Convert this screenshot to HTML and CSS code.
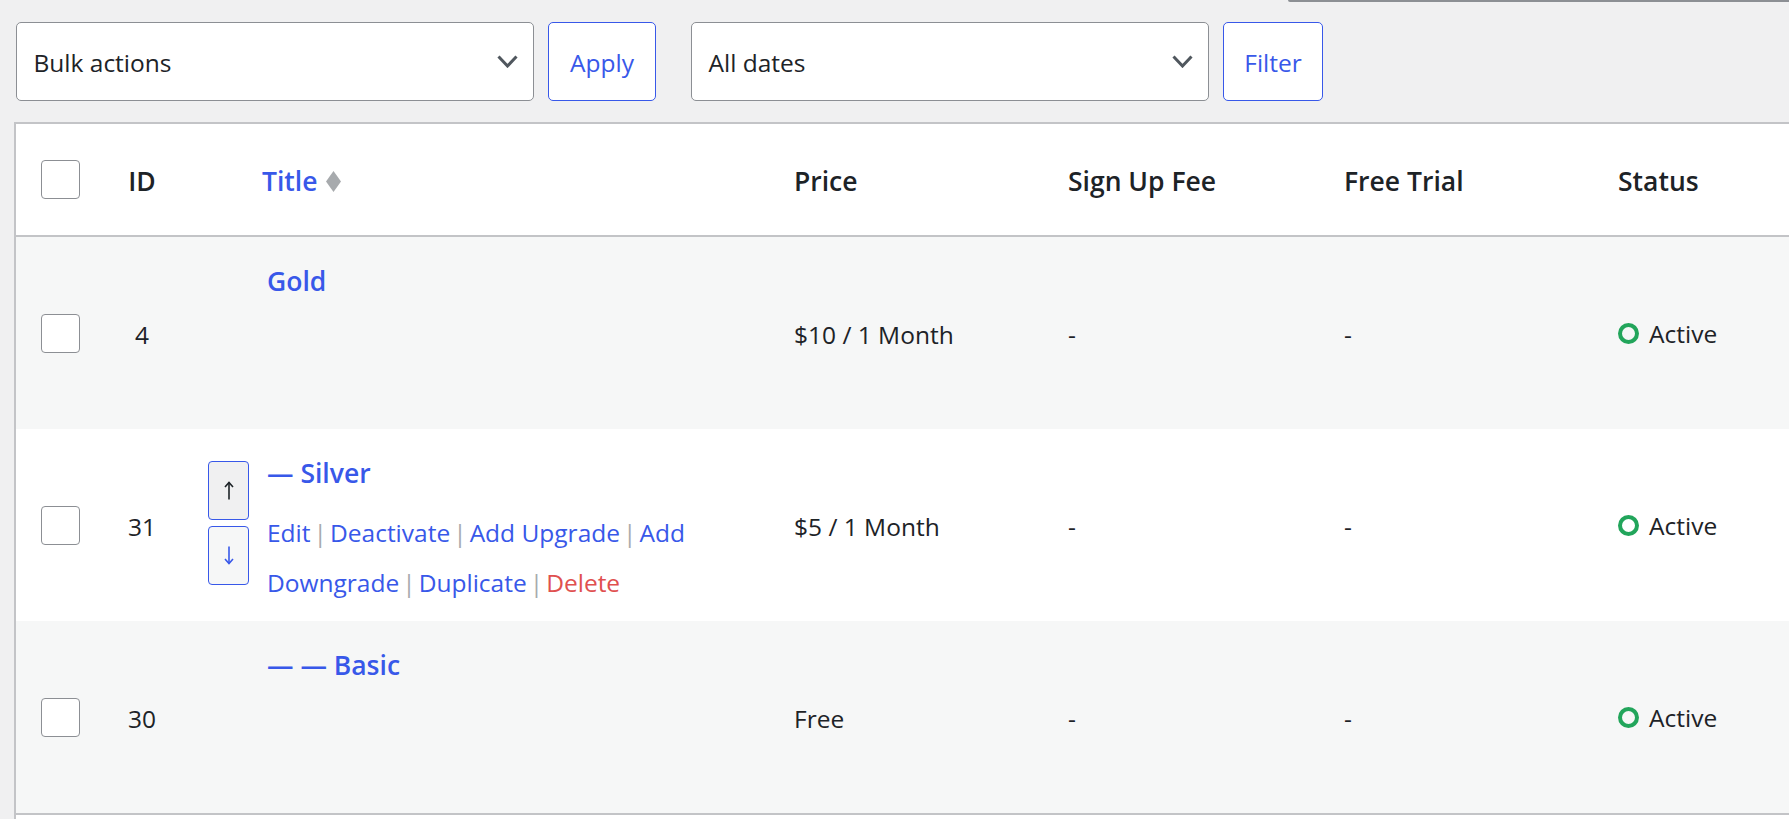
FILE: index.html
```html
<!DOCTYPE html>
<html lang="en">
<head>
<meta charset="utf-8">
<title>Subscription Plans</title>
<link rel="stylesheet" href="styles.css">
</head>
<body>
<div class="wrap">
  <div class="topline-row"><div class="topline"></div></div>

  <div class="tablenav">
    <div class="select">
      <span>Bulk actions</span>
      <svg class="chev" width="21" height="13" viewBox="0 0 21 13"><polyline points="1.5,1.5 10.5,11 19.5,1.5" fill="none" stroke="#50575e" stroke-width="3"/></svg>
    </div>
    <div class="btn">Apply</div>
    <div class="select select-dates">
      <span>All dates</span>
      <svg class="chev" width="21" height="13" viewBox="0 0 21 13"><polyline points="1.5,1.5 10.5,11 19.5,1.5" fill="none" stroke="#50575e" stroke-width="3"/></svg>
    </div>
    <div class="btn btn-filter">Filter</div>
  </div>

  <table class="list">
    <colgroup>
      <col class="c-cb"><col class="c-id"><col class="c-title"><col class="c-price"><col class="c-fee"><col class="c-trial"><col class="c-status">
    </colgroup>
    <thead>
      <tr>
        <th class="cb"><span class="checkbox"></span></th>
        <th class="id">ID</th>
        <th class="title-h"><a class="sort">Title</a><svg class="sorticon" width="15" height="21" viewBox="0 0 15 21"><polygon points="7.5,0 15,10.5 7.5,21 0,10.5" fill="#a7aaad"/></svg></th>
        <th>Price</th>
        <th>Sign Up Fee</th>
        <th>Free Trial</th>
        <th>Status</th>
      </tr>
    </thead>
    <tbody>
      <tr class="alt">
        <td class="cb"><span class="checkbox"></span></td>
        <td class="id">4</td>
        <td class="title">
          <div class="title-flex">
            <div class="arrows"></div>
            <div class="title-main"><div class="title-line"><a class="row-title">Gold</a></div></div>
          </div>
        </td>
        <td>$10 / 1 Month</td>
        <td>-</td>
        <td>-</td>
        <td><span class="status"><svg width="21" height="21" viewBox="0 0 21 21"><circle cx="10.5" cy="10.5" r="8.5" fill="none" stroke="#22a55b" stroke-width="4"/></svg>Active</span></td>
      </tr>
      <tr>
        <td class="cb"><span class="checkbox"></span></td>
        <td class="id">31</td>
        <td class="title">
          <div class="title-flex">
            <div class="arrows">
              <span class="arrow arrow-up"><svg width="10" height="19" viewBox="0 0 10 19"><line x1="5" y1="1.5" x2="5" y2="18.5" stroke="#1d2327" stroke-width="1.6"/><polyline points="1,6 5,1.5 9,6" fill="none" stroke="#1d2327" stroke-width="1.6"/></svg></span>
              <span class="arrow arrow-down"><svg width="10" height="19" viewBox="0 0 10 19"><line x1="5" y1="0.5" x2="5" y2="17.5" stroke="#3858e9" stroke-width="1.6"/><polyline points="1,13 5,17.5 9,13" fill="none" stroke="#3858e9" stroke-width="1.6"/></svg></span>
            </div>
            <div class="title-main">
              <div class="title-line"><a class="row-title">— Silver</a></div>
              <div class="row-actions"><span class="line"><a>Edit</a><span class="sep">|</span><a>Deactivate</a><span class="sep">|</span><a>Add Upgrade</a><span class="sep">|</span><a>Add</a></span> <span class="line"><a>Downgrade</a><span class="sep">|</span><a>Duplicate</a><span class="sep">|</span><a class="delete">Delete</a></span></div>
            </div>
          </div>
        </td>
        <td>$5 / 1 Month</td>
        <td>-</td>
        <td>-</td>
        <td><span class="status"><svg width="21" height="21" viewBox="0 0 21 21"><circle cx="10.5" cy="10.5" r="8.5" fill="none" stroke="#22a55b" stroke-width="4"/></svg>Active</span></td>
      </tr>
      <tr class="alt">
        <td class="cb"><span class="checkbox"></span></td>
        <td class="id">30</td>
        <td class="title">
          <div class="title-flex">
            <div class="arrows"></div>
            <div class="title-main"><div class="title-line"><a class="row-title">— — Basic</a></div></div>
          </div>
        </td>
        <td>Free</td>
        <td>-</td>
        <td>-</td>
        <td><span class="status"><svg width="21" height="21" viewBox="0 0 21 21"><circle cx="10.5" cy="10.5" r="8.5" fill="none" stroke="#22a55b" stroke-width="4"/></svg>Active</span></td>
      </tr>
    </tbody>
    <tfoot>
      <tr><td></td><td></td><td></td><td></td><td></td><td></td><td></td></tr>
    </tfoot>
  </table>
</div>
</body>
</html>
```

FILE: styles.css
```css
html, body {
  margin: 0;
  padding: 0;
  overflow: hidden;
}
body {
  background: #f0f0f1;
  color: #1d2327;
  font-family: "Open Sans", "Noto Sans", "Liberation Sans", sans-serif;
  font-size: 24.5px;
}
a {
  color: #3858e9;
  text-decoration: none;
}
.wrap {
  padding-left: 14px;
  width: 1894px;
}
.topline-row {
  display: flex;
  justify-content: flex-end;
  width: 1775px;
  height: 2px;
}
.topline {
  width: 501px;
  height: 2px;
  background: #8c8f94;
  border-bottom-left-radius: 3px;
}
.tablenav {
  display: flex;
  align-items: center;
  margin: 20px 0 21px 2px;
  height: 79px;
}
.select {
  box-sizing: border-box;
  width: 518px;
  height: 79px;
  border: 1.5px solid #8c8f94;
  border-radius: 5px;
  background: #fff;
  display: flex;
  align-items: center;
  justify-content: space-between;
  padding: 2px 15px 0 16.5px;
  color: #1d2327;
}
.select .chev {
  margin-top: -2px;
}
.select-dates {
  margin-left: 35px;
}
.btn {
  box-sizing: border-box;
  width: 108px;
  height: 79px;
  margin-left: 14px;
  padding-top: 2px;
  border: 1.5px solid #3858e9;
  border-radius: 5px;
  background: #fff;
  color: #3858e9;
  display: flex;
  align-items: center;
  justify-content: center;
}
.btn-filter {
  width: 100px;
}
.chev {
  display: block;
}
.list {
  table-layout: fixed;
  width: 1894px;
  border-spacing: 0;
  border-collapse: separate;
  background: #fff;
  border-top: 2px solid #c3c4c7;
  border-left: 2px solid #c3c4c7;
}
.c-cb { width: 91px; }
.c-id { width: 70px; }
.c-title { width: 607px; }
.c-price { width: 274px; }
.c-fee { width: 276px; }
.c-trial { width: 274px; }
.c-status { width: 300px; }
th, td {
  padding: 2px 10px 0;
  text-align: left;
  vertical-align: middle;
}
thead th {
  height: 109px;
  font-size: 26.5px;
  font-weight: 600;
  border-bottom: 2px solid #c3c4c7;
  white-space: nowrap;
}
th.cb, td.cb {
  padding: 0 0 0 25px;
}
th.id, td.id {
  text-align: center;
  padding: 2px 0 0;
}
th.title-h {
  padding-left: 85px;
}
.sort {
  font-weight: 600;
}
.sorticon {
  vertical-align: -1px;
  margin-left: 8px;
}
.checkbox {
  display: block;
  box-sizing: border-box;
  width: 39px;
  height: 39px;
  border: 1.5px solid #8c8f94;
  border-radius: 4px;
  background: #fff;
}
tbody tr {
  height: 192px;
}
tbody tr.alt td {
  background: #f6f7f7;
}
tbody td.title {
  vertical-align: top;
  padding: 23.5px 10px 0 31px;
}
.title-flex {
  display: flex;
}
.arrows {
  flex: 0 0 41px;
  margin-right: 18px;
  margin-top: 8.5px;
  display: flex;
  flex-direction: column;
  gap: 6px;
}
.arrow {
  box-sizing: border-box;
  width: 41px;
  height: 59px;
  border: 1.5px solid #3858e9;
  border-radius: 4px;
  display: flex;
  align-items: center;
  justify-content: center;
}
.arrow-up {
  background: #f0f0f1;
}
.arrow-down {
  background: #f6f7f7;
}
.arrow svg {
  display: block;
}
.title-main {
  flex: 1;
}
.title-line {
  height: 40px;
  line-height: 40px;
}
.row-title {
  font-size: 26.5px;
  font-weight: 600;
}
.row-actions {
  margin-top: 15px;
  line-height: 50px;
}
.row-actions .line {
  display: block;
  white-space: nowrap;
}
.sep {
  color: #a7aaad;
  margin: 0 3px;
}
.delete {
  color: #e0504f;
}
.status {
  display: inline-flex;
  align-items: center;
  gap: 10px;
}
.status svg {
  display: block;
}
tfoot td {
  height: 60px;
  border-top: 2px solid #c3c4c7;
  background: #fff;
}
```
